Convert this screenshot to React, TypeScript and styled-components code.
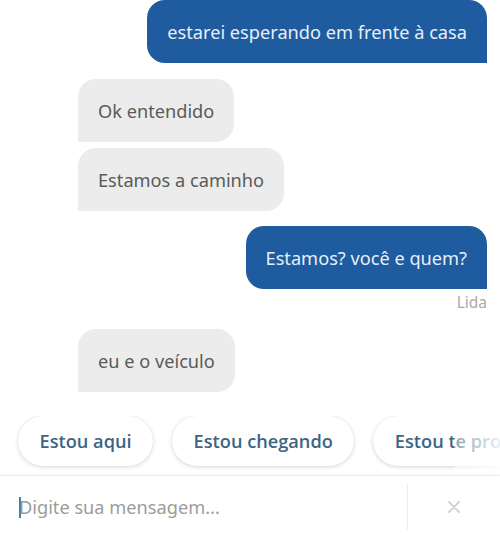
import React from "react";
import styled, { createGlobalStyle } from "styled-components";

const Global = createGlobalStyle`
  html, body { margin: 0; padding: 0; background: #ffffff; }
  body { font-family: "Noto Sans", "Open Sans", sans-serif; }
`;

const Screen = styled.div`
  width: 500px;
  height: 538px;
  display: flex;
  flex-direction: column;
  overflow: hidden;
  background: #fff;
`;

const Thread = styled.div`
  display: flex;
  flex-direction: column;
  padding: 0 13px 0 78px;
`;

const Row = styled.div<{ $side: "in" | "out"; $gap: number }>`
  display: flex;
  flex-direction: column;
  align-items: ${(p) => (p.$side === "out" ? "flex-end" : "flex-start")};
  margin-top: ${(p) => p.$gap}px;
`;

const Bubble = styled.div<{ $side: "in" | "out" }>`
  height: 63px;
  box-sizing: border-box;
  display: flex;
  align-items: center;
  padding: 0 20px;
  font-size: 18.2px;
  white-space: nowrap;
  border-radius: ${(p) => (p.$side === "out" ? "18px 18px 0 18px" : "18px 18px 18px 0")};
  background: ${(p) => (p.$side === "out" ? "#1f5b9f" : "#ececec")};
  color: ${(p) => (p.$side === "out" ? "#e6eff8" : "#5a5a5a")};
`;

const Status = styled.div`
  margin-top: 2px;
  font-size: 15.5px;
  color: #a9a9a9;
`;

const ChipBar = styled.div`
  position: relative;
  display: flex;
  gap: 19px;
  padding: 0 0 0 18px;
  margin-top: 24px;
  height: 54px;
  overflow: hidden;
`;

const Chip = styled.div`
  flex: none;
  height: 50px;
  box-sizing: border-box;
  padding: 0 21.5px;
  display: flex;
  align-items: center;
  border-radius: 25px;
  background: #fff;
  box-shadow: 0 1px 4px rgba(0, 0, 0, 0.16), 0 0 1px rgba(0, 0, 0, 0.08);
  font-family: "Open Sans", "Noto Sans", sans-serif;
  font-weight: 600;
  font-size: 18.2px;
  color: #3b6582;
  white-space: nowrap;
`;

const Fade = styled.div`
  position: absolute;
  top: 0;
  right: 0;
  width: 46px;
  height: 100%;
  background: linear-gradient(to right, rgba(255, 255, 255, 0.4), rgba(255, 255, 255, 0.9));
`;

const Composer = styled.div`
  margin-top: 5px;
  border-top: 1px solid #efefef;
  box-shadow: 0 -1px 2px rgba(0, 0, 0, 0.03);
  flex: 1;
  display: flex;
  align-items: center;
`;

const InputArea = styled.div`
  flex: 1;
  display: flex;
  align-items: center;
  padding-left: 19px;
  font-size: 18.2px;
  color: #9c9c9c;
`;

const Caret = styled.span`
  display: inline-block;
  width: 2px;
  height: 21px;
  background: #4d7c9c;
  margin-right: -2px;
`;

const Separator = styled.div`
  width: 1px;
  height: 46px;
  background: #ececec;
`;

const Clear = styled.div`
  width: 92px;
  display: flex;
  justify-content: center;
  align-items: center;
`;

export default function App() {
  return (
    <Screen>
      <Global />
      <Thread>
        <Row $side="out" $gap={0}>
          <Bubble $side="out">estarei esperando em frente à casa</Bubble>
        </Row>
        <Row $side="in" $gap={16}>
          <Bubble $side="in">Ok entendido</Bubble>
        </Row>
        <Row $side="in" $gap={6}>
          <Bubble $side="in">Estamos a caminho</Bubble>
        </Row>
        <Row $side="out" $gap={15}>
          <Bubble $side="out">Estamos? você e quem?</Bubble>
          <Status>Lida</Status>
        </Row>
        <Row $side="in" $gap={16}>
          <Bubble $side="in">eu e o veículo</Bubble>
        </Row>
      </Thread>
      <ChipBar>
        <Chip>Estou aqui</Chip>
        <Chip>Estou chegando</Chip>
        <Chip>Estou te procurando</Chip>
        <Fade />
      </ChipBar>
      <Composer>
        <InputArea>
          <Caret />
          Digite sua mensagem...
        </InputArea>
        <Separator />
        <Clear>
          <svg width="14" height="14" viewBox="0 0 14 14">
            <path d="M2 2 L12 12 M12 2 L2 12" stroke="#d2d2d2" strokeWidth="1.8" strokeLinecap="round" />
          </svg>
        </Clear>
      </Composer>
    </Screen>
  );
}
